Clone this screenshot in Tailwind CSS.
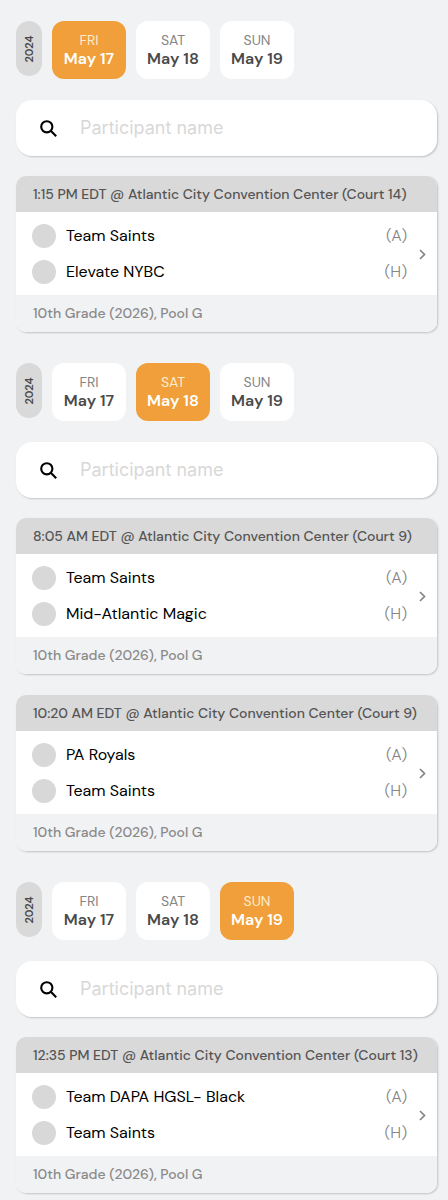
<!DOCTYPE html>
<html lang="en">

<head>
  <meta charset="UTF-8" />
  <meta name="viewport" content="width=device-width, initial-scale=1.0" />
  <title>Game Schedule</title>
  <script src="https://cdn.jsdelivr.net/npm/@tailwindcss/browser@4"></script>
</head>

<body class="bg-[#f1f2f4] text-black font-['DM_Sans','Inter',sans-serif]">
  <main id="schedule" class="pt-[21px] pb-1.5 pl-4 pr-[11px] space-y-[31px]"></main>

  <script>
    const days = [
      { name: 'FRI', date: 'May 17' },
      { name: 'SAT', date: 'May 18' },
      { name: 'SUN', date: 'May 19' },
    ];

    const venue = 'Atlantic City Convention Center';
    const division = '10th Grade (2026), Pool G';

    const sections = [
      { date: 'May 17', games: [
        { time: '1:15 PM EDT', court: 'Court 14', away: 'Team Saints', home: 'Elevate NYBC' },
      ] },
      { date: 'May 18', games: [
        { time: '8:05 AM EDT', court: 'Court 9', away: 'Team Saints', home: 'Mid-Atlantic Magic' },
        { time: '10:20 AM EDT', court: 'Court 9', away: 'PA Royals', home: 'Team Saints' },
      ] },
      { date: 'May 19', games: [
        { time: '12:35 PM EDT', court: 'Court 13', away: 'Team DAPA HGSL- Black', home: 'Team Saints' },
      ] },
    ];

    function renderDay(day, selected) {
      const active = day.date === selected;
      return `
        <button type="button" aria-pressed="${active}"
          class="w-[74px] h-[58px] rounded-[12px] flex flex-col items-center justify-center ${active ? 'bg-[#f09f3a] text-white' : 'bg-white text-[#4a4a4a]'}">
          <span class="text-[14px] leading-[18px] ${active ? 'text-[#fdeccb]' : 'text-[#858585]'}">${day.name}</span>
          <span class="text-[16px] leading-5 font-semibold">${day.date}</span>
        </button>`;
    }

    function renderTeam(name, side) {
      return `
        <div class="flex items-center gap-2.5">
          <span class="size-6 shrink-0 rounded-full bg-[#d8d8d8]"></span>
          <span class="flex-1 text-[16px] leading-6">${name}</span>
          <span class="text-[16px] leading-6 font-light text-[#858585]">(${side})</span>
        </div>`;
    }

    function renderGame(game) {
      return `
        <article class="rounded-[10px] overflow-hidden bg-white shadow-[1px_1px_2px_rgba(0,0,0,0.2)]">
          <h2 class="px-[17px] py-2 bg-[#d9d9d9] text-[14px] leading-5 font-medium text-[#555555]">${game.time} @ ${venue} (${game.court})</h2>
          <a href="#" class="flex items-center gap-3 pl-4 pr-[11px] pt-3 pb-[11px]">
            <div class="flex-1 space-y-3">
              ${renderTeam(game.away, 'A')}
              ${renderTeam(game.home, 'H')}
            </div>
            <svg class="w-[7px] h-[11px]" viewBox="0 0 7 11" fill="none" stroke="#858585" stroke-width="1.7">
              <path d="M1 1l4.5 4.5L1 10" />
            </svg>
          </a>
          <p class="px-[17px] pt-2 pb-[9px] bg-[#f1f2f4] text-[14px] leading-5 font-medium text-[#8a8a8a]">${division}</p>
        </article>`;
    }

    function renderSection(section, i) {
      return `
        <section>
          <div class="flex items-start gap-2.5">
            <div class="w-[26px] h-[55px] rounded-full bg-[#d9d9d9] flex items-center justify-center">
              <span class="-rotate-90 text-[11px] leading-4 font-semibold text-[#4a4a4a]">2024</span>
            </div>
            ${days.map(day => renderDay(day, section.date)).join('')}
          </div>
          <div class="mt-[21px] h-14 pl-6 pr-4 flex items-center gap-[23px] rounded-[16px] bg-white shadow-[1px_1px_2px_rgba(0,0,0,0.2)]">
            <label for="search${i}" aria-label="Search participants">
              <svg class="size-[17px]" viewBox="0 0 17 17" fill="none" stroke="#000" stroke-width="2.1">
                <circle cx="6.8" cy="6.8" r="5.6" />
                <path d="M10.8 10.8l5.4 5.4" />
              </svg>
            </label>
            <input id="search${i}" type="text" placeholder="Participant name"
              class="flex-1 min-w-0 text-[18px] leading-6 placeholder:text-[#d8d8d8] font-['Inter',sans-serif] focus:outline-none" />
          </div>
          <div class="mt-5 space-y-[21px]">
            ${section.games.map(renderGame).join('')}
          </div>
        </section>`;
    }

    document.getElementById('schedule').innerHTML = sections.map(renderSection).join('');
  </script>
</body>

</html>
